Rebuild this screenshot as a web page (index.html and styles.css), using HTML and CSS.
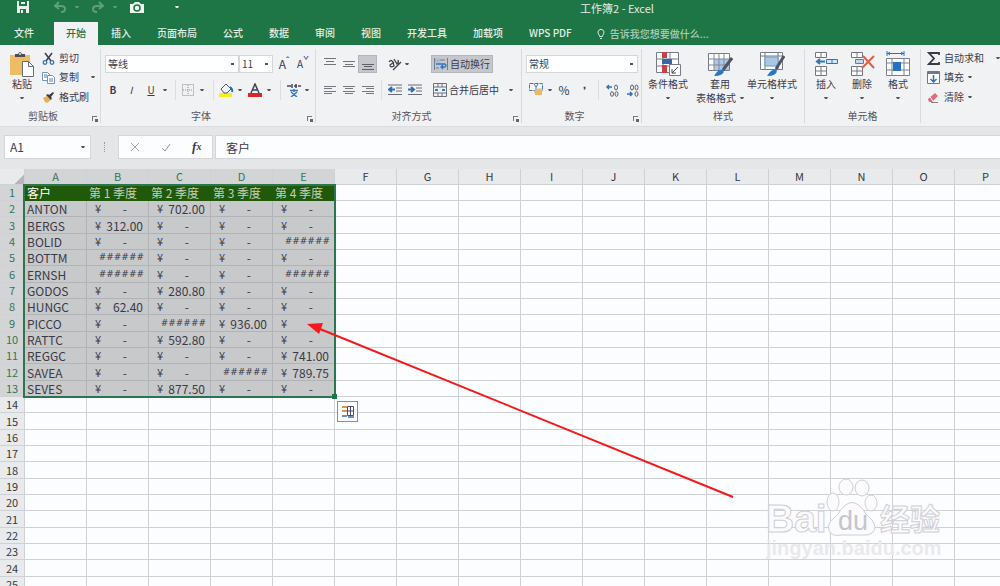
FILE: index.html
```html
<!DOCTYPE html>
<html lang="zh-CN">
<head>
<meta charset="utf-8">
<title>工作簿2 - Excel</title>
<link rel="stylesheet" href="styles.css">
</head>
<body>
<header class="top">
  <div class="titlebar">
    <div class="quick">
      <button aria-label="保存"><svg width="14" height="14" viewBox="0 0 14 14"><path d="M1 1h12v12H1z" fill="#e9f3ec"/><path d="M3 1h8v5H3zM4 9h6v4H4z" fill="#1e7545"/><path d="M5 2h4v2H5zM5 10h2v3H5z" fill="#e9f3ec"/></svg></button>
      <button aria-label="撤消"><svg width="14" height="12" viewBox="0 0 14 12" fill="none" stroke="#5f9f7a" stroke-width="2"><path d="M6 1L2 5l4 3M2 5h6q4 0 4 3t-4 3"/></svg></button>
      <i class="caret dim"></i>
      <button aria-label="恢复"><svg width="14" height="12" viewBox="0 0 14 12" fill="none" stroke="#5f9f7a" stroke-width="2"><path d="M8 1l4 4-4 3M12 5H6q-4 0-4 3t4 3"/></svg></button>
      <i class="caret dim"></i>
      <button aria-label="截图"><svg width="16" height="13" viewBox="0 0 16 13"><path d="M1 3h3l2-2h4l2 2h3v9H1z" fill="#eef6f0"/><circle cx="8" cy="7" r="3" fill="none" stroke="#1e7545" stroke-width="1.5"/></svg></button>
      <i class="caret lit"></i>
    </div>
    <div class="doc">工作簿2 - Excel</div>
  </div>
  <nav class="tabs">
    <a href="#" class="file">文件</a><a href="#" class="active">开始</a><a href="#">插入</a><a href="#">页面布局</a><a href="#">公式</a><a href="#">数据</a><a href="#">审阅</a><a href="#">视图</a><a href="#">开发工具</a><a href="#">加载项</a><a href="#">WPS PDF</a>
    <button class="tell"><svg width="8" height="12" viewBox="0 0 8 12" fill="none" stroke="#d5e8dc"><path d="M2.5 8.500Q2.500 7 1.500 6A3 3 0 1 1 6.500 6Q5.500 7 5.500 8.500zM3 10.500h2"/></svg>告诉我您想要做什么...</button>
  </nav>
</header>

<section class="ribbon">
  <div class="group clipboard">
    <div class="body">
      <button class="big"><svg width="26" height="26" viewBox="0 0 26 26"><path d="M1 4h20v20H1z" fill="#edbc63"/><path d="M6 6V3h3q2-4 4 0h3v3z" fill="#4c4d55"/><circle cx="11" cy="3" r="1" fill="#eee"/><path d="M13.500 10.500h6l5 5v10h-11z" fill="#fff" stroke="#666a78"/><path d="M19.500 10.500v5h5" fill="none" stroke="#666a78"/></svg><span>粘贴</span><i class="caret"></i></button>
      <div class="stack">
        <button><svg width="13" height="13" viewBox="0 0 13 13" fill="none"><path d="M3 1l6 8M10 1L4 9" stroke="#383c55" stroke-width="1.500"/><circle cx="3" cy="10.500" r="1.800" stroke="#3b6fae" stroke-width="1.300"/><circle cx="10" cy="10.500" r="1.800" stroke="#3b6fae" stroke-width="1.300"/></svg>剪切</button>
        <button><svg width="13" height="13" viewBox="0 0 13 13" fill="#fff" stroke="#7591bb"><path d="M.5 1.500h5l2 2v6h-7z"/><path d="M5.500 4.500h5l2 2v6h-7z"/><path d="M7 8h4M7 10h4M2 4h3M2 6h3" stroke="#4e83c0"/></svg>复制<i class="caret gap"></i></button>
        <button><svg width="13" height="13" viewBox="0 0 13 13"><path d="M1 7l4-2 4 4-4 3-2-1z" fill="#e5ae59"/><path d="M4 4l5 5 1-2-1-1 3-4-1-1-4 3-1-1z" fill="#3d3c45"/></svg>格式刷</button>
      </div>
    </div>
    <div class="name">剪贴板<i class="launch"></i></div>
  </div>

  <div class="group font">
    <div class="body rows">
      <div class="line fontline">
        <select aria-label="字体"><option>等线</option></select>
        <select aria-label="字号"><option>11</option></select>
        <button class="grow" aria-label="增大字号">A<sup>ˆ</sup></button>
        <button class="shrink" aria-label="减小字号">A<sup>ˇ</sup></button>
      </div>
      <div class="line tools">
        <button><b>B</b></button><button><em>I</em></button><button><u>U</u></button><i class="caret"></i><i class="bar"></i>
        <button aria-label="边框"><svg width="12" height="12" viewBox="0 0 12 12" fill="none" stroke="#8c8f98"><path d="M.5.5h11v11H.5zM6 1v10M1 6h10" stroke-dasharray="1 1"/></svg></button><i class="caret"></i><i class="bar"></i>
        <button aria-label="填充颜色"><svg width="16" height="14" viewBox="0 0 16 14"><path d="M1 10h13v4H1z" fill="#f4ef19"/><path d="M3 6l5-5 5 5-4 4H6z" fill="#f3f5fa" stroke="#4a5574"/><path d="M12 4q3 2 2 5" fill="none" stroke="#2e6db4" stroke-width="2"/></svg></button><i class="caret"></i>
        <button aria-label="字体颜色"><svg width="14" height="14" viewBox="0 0 14 14"><path d="M0 10h14v4H0z" fill="#d8272a"/><path d="M3 10l4-9 4 9M5 7h4" fill="none" stroke="#3e4258" stroke-width="1.500"/></svg></button><i class="caret"></i><i class="bar"></i>
        <button aria-label="拼音指南"><svg width="14" height="14" viewBox="0 0 14 14" fill="none"><path d="M0 3h4M5 1v4M7 3h3M11 3h3M9 1v4" stroke="#47485a" stroke-width="1.500"/><path d="M3 7.500h8M7 6v3M4 9l6 5M10 9l-6 5" stroke="#3b77bd" stroke-width="1.500"/></svg></button><i class="caret"></i>
      </div>
    </div>
    <div class="name">字体<i class="launch"></i></div>
  </div>

  <div class="group align">
    <div class="body rows">
      <div class="line alignline">
        <button aria-label="顶端对齐"><svg width="12" height="14" viewBox="0 0 12 14" stroke="#72747c"><path d="M0 1.500h12M2 4.500h8M0 7.500h12"/></svg></button>
        <button aria-label="垂直居中"><svg width="12" height="14" viewBox="0 0 12 14" stroke="#72747c"><path d="M0 4.500h12M2 7.500h8M0 9.500h12"/></svg></button>
        <button class="on" aria-label="底端对齐"><svg width="12" height="14" viewBox="0 0 12 14" stroke="#5e6068"><path d="M0 7.500h12M2 9.500h8M0 12.500h12"/></svg></button>
        <i></i>
        <button aria-label="方向"><svg width="14" height="14" viewBox="0 0 14 14" fill="none" stroke="#42434d" stroke-width="1.300"><path d="M1 5q2-3 4 0l1 4q-4 2-4-1l4-3M6 2l3 5q2-1 1-4M5 13l8-8"/></svg></button>
        <i class="caret"></i>
        <button class="wrap on"><svg width="14" height="14" viewBox="0 0 14 14" fill="none"><path d="M.5 1v12M13.500 1v12M2 3h9M2 11h3" stroke="#747b8d"/><path d="M1 1.500h5v4H1z" fill="#9dbbe0"/><path d="M2 7h9q2 1 0 3H7M9 8l-2 2 2 2" stroke="#3472b9" stroke-width="1.300"/></svg>自动换行</button>
      </div>
      <div class="line alignline">
        <button aria-label="左对齐"><svg width="12" height="10" viewBox="0 0 12 10" stroke="#777982"><path d="M0 1.500h12M0 3.500h8M0 6.500h12M0 8.500h8"/></svg></button>
        <button aria-label="居中"><svg width="12" height="10" viewBox="0 0 12 10" stroke="#777982"><path d="M0 1.500h12M2 3.500h8M0 6.500h12M2 8.500h8"/></svg></button>
        <button aria-label="右对齐"><svg width="12" height="10" viewBox="0 0 12 10" stroke="#777982"><path d="M0 1.500h12M4 3.500h8M0 6.500h12M4 8.500h8"/></svg></button>
        <i class="bar"></i>
        <button aria-label="减少缩进"><svg width="14" height="12" viewBox="0 0 14 12" fill="none"><path d="M0 1h14M8 4h6M8 7h6M0 10.500h14" stroke="#6a6d78"/><path d="M7 5.500H2M4 3L1 5.500 4 8" stroke="#2c6ebb" stroke-width="2"/></svg></button>
        <button aria-label="增加缩进"><svg width="14" height="12" viewBox="0 0 14 12" fill="none"><path d="M0 1h14M8 4h6M8 7h6M0 10.500h14" stroke="#6a6d78"/><path d="M0 5.500h5M3 3l3 2.500L3 8" stroke="#2c6ebb" stroke-width="2"/></svg></button>
        <button class="wrap"><svg width="14" height="14" viewBox="0 0 14 14" fill="none" stroke="#6d7180"><path d="M.5.5h13v13H.5zM5 0v4M9 0v4M5 10v4M9 10v4M0 4h14M0 10h14"/><path d="M2 7h3M12 7H9" stroke="#3978bd" stroke-width="2"/></svg>合并后居中<i class="caret gap"></i></button>
      </div>
    </div>
    <div class="name">对齐方式<i class="launch"></i></div>
  </div>

  <div class="group number">
    <div class="body rows">
      <div class="line numline"><select aria-label="数字格式"><option>常规</option></select></div>
      <div class="line numtools">
        <button aria-label="会计数字格式"><svg width="15" height="14" viewBox="0 0 15 14"><path d="M.5.5h13v7H.5z" fill="#f7f9fc" stroke="#3b77bb" stroke-dasharray="4 1"/><path d="M5 1l2 3 2-3M7 4v3" stroke="#3b77bb" fill="none"/><path d="M5 8q4-4 8-2v6H6z" fill="#ecb966"/></svg></button><i class="caret"></i>
        <button class="pct">%</button><button class="comma">❜</button><i class="bar"></i>
        <button aria-label="增加小数位数"><svg width="13" height="13" viewBox="0 0 13 13" fill="none" stroke="#5c5e6a"><path d="M1 3h5M3 1L1 3l2 2" stroke="#2f70b8" stroke-width="1.500"/><ellipse cx="10" cy="3.500" rx="1.500" ry="2.500"/><ellipse cx="6" cy="10" rx="1.500" ry="2.300"/><ellipse cx="10.500" cy="10" rx="1.500" ry="2.300"/></svg></button>
        <button aria-label="减少小数位数"><svg width="13" height="13" viewBox="0 0 13 13" fill="none" stroke="#5c5e6a"><path d="M1 10h5M4 8l2 2-2 2" stroke="#2f70b8" stroke-width="1.500"/><ellipse cx="6" cy="3.500" rx="1.500" ry="2.500"/><ellipse cx="10.500" cy="3.500" rx="1.500" ry="2.500"/><ellipse cx="10.500" cy="10" rx="1.500" ry="2.300"/></svg></button>
      </div>
    </div>
    <div class="name">数字<i class="launch"></i></div>
  </div>

  <div class="group styles">
    <div class="body">
      <button class="big"><svg width="26" height="26" viewBox="0 0 26 26" fill="none"><path d="M1.500 1.500h22v20h-22zM8 1v20M15 1v20M1 8h22M1 15h22" fill="#fff" stroke="#777b87"/><path d="M7 1h5v6H7zM7 14h5v8H7z" fill="#cb3e47"/><path d="M7 8h10v5H7z" fill="#3767aa"/><path d="M14.500 13.500h11v11h-11z" fill="#fff" stroke="#777b87"/><path d="M17 22l6-6M17 18v4h4" stroke="#444"/></svg><span>条件格式</span><i class="caret"></i></button>
      <button class="big"><svg width="26" height="26" viewBox="0 0 26 26" fill="none"><path d="M1.500 2.500h21v17h-21z" fill="#fff" stroke="#777b87"/><path d="M7 8h15v11H7z" fill="#a9c8e8"/><path d="M7 3v16M12 3v16M17 3v16M2 8h20M2 14h20" stroke="#858995"/><path d="M25 7L16 19" stroke="#515461" stroke-width="3"/><path d="M7 25q5-8 10-6 0 6-10 6z" fill="#2877c4"/></svg><span>套用</span><span class="more">表格格式<i class="caret"></i></span></button>
      <button class="big"><svg width="26" height="26" viewBox="0 0 26 26" fill="none"><path d="M1.500 1.500h22v17h-22zM1 5h22M6 1v17M19 1v17" fill="#fff" stroke="#777b87"/><path d="M6 6h13v9H6z" fill="#a9c8e8" stroke="#6e96c5"/><path d="M25 5l-8 13" stroke="#515461" stroke-width="3"/><path d="M8 25q5-8 10-6 0 6-10 6z" fill="#2877c4"/></svg><span>单元格样式</span><i class="caret"></i></button>
    </div>
    <div class="name">样式</div>
  </div>

  <div class="group cells">
    <div class="body">
      <button class="big"><svg width="26" height="26" viewBox="0 0 26 26" fill="none" stroke="#747783"><path d="M2.500 1.500h11v5h-11zM8 1v5M2.500 15.500h11v9h-11zM8 15v10M2 20h12" fill="#fff"/><path d="M13.500 8.500h11v4h-11zM19 8v5" fill="#d7e6f5" stroke="#2f74bd"/><path d="M12 10.500H4M7 8l-3 2.500L7 13" stroke="#2f74bd" stroke-width="2"/></svg><span>插入</span><i class="caret"></i></button>
      <button class="big"><svg width="26" height="26" viewBox="0 0 26 26" fill="none" stroke="#747783"><path d="M2.500 1.500h11v5h-11zM8 1v5M2.500 15.500h11v9h-11zM8 15v10M2 20h12" fill="#fff"/><path d="M6.500 8.500h8v4h-8z" fill="#c2d7ed"/><path d="M14 5l11 12M25 5L13 17" stroke="#dd6045" stroke-width="2"/></svg><span>删除</span><i class="caret"></i></button>
      <button class="big"><svg width="26" height="26" viewBox="0 0 26 26" fill="none"><path d="M1.500 7.500h23v17h-23zM7 7v17M19 7v17M1 12h23M1 19h23" fill="#fff" stroke="#7d818d"/><path d="M8 11h8v9H8z" fill="#2472c2"/><path d="M2 2.500h17M2 0v5M19 0v5M5 1L3 2.500 5 4M16 1l2 1.500L16 4" stroke="#2472c2"/></svg><span>格式</span><i class="caret"></i></button>
    </div>
    <div class="name">单元格</div>
  </div>

  <div class="group edit">
    <div class="body"><div class="stack">
      <button><svg width="13" height="13" viewBox="0 0 13 13" fill="none" stroke="#373945" stroke-width="1.800"><path d="M12 3V1H2l5 5.500L2 12h10v-2"/></svg>自动求和<i class="caret gap"></i></button>
      <button><svg width="13" height="13" viewBox="0 0 13 13" fill="none"><path d="M.5.5h12v12H.5z" fill="#fff" stroke="#6f7789"/><path d="M0 2h13" stroke="#6f7789" stroke-width="2"/><path d="M6.500 4v7M3.500 8l3 3 3-3" stroke="#2b70be" stroke-width="1.500"/></svg>填充<i class="caret"></i></button>
      <button><svg width="13" height="13" viewBox="0 0 13 13"><path d="M1 8l7-6 3 3-6 6H2z" fill="#e8697a"/><path d="M3 6l3 4" stroke="#fff"/><path d="M4 11.500h7" stroke="#8c7d83"/></svg>清除<i class="caret"></i></button>
    </div></div>
  </div>
</section>

<section class="formula">
  <label class="box namebox"><input aria-label="名称框" value="A1"><i class="caret"></i></label>
  <i class="dots"></i>
  <div class="box fx">
    <button aria-label="取消"><svg width="10" height="10" viewBox="0 0 10 10" stroke="#a5a7ad"><path d="M1 1l8 8M9 1L1 9"/></svg></button>
    <button aria-label="输入"><svg width="10" height="10" viewBox="0 0 10 10" fill="none" stroke="#8f9198"><path d="M1 6l3 3 5-7"/></svg></button>
    <button class="fn"><em>f</em>x</button>
  </div>
  <input class="box value" aria-label="编辑栏" value="客户">
</section>

<main class="sheet">
  <table id="grid"></table>
  <div class="selection"></div>
  <button class="tag" aria-label="快速分析"><svg width="14" height="14" viewBox="0 0 14 14" fill="none"><path d="M1 2h5M1 6h5" stroke="#e29350" stroke-width="2"/><path d="M1 11h5M7 12h6" stroke="#6d8fc0" stroke-width="2"/><path d="M6.500 1.500h6v9h-6zM6 6h7M9.500 2v9" stroke="#4c4a72"/></svg></button>
  <svg class="arrow" width="450" height="190" viewBox="0 0 450 190"><path d="M20 10L433 178" stroke="#f5191b" stroke-width="2"/><path d="M7 5l16-1-4 11z" fill="#f5191b"/></svg>
  <svg class="mark" width="182" height="90" viewBox="0 0 182 90">
    <g fill="#fbfbfd" stroke="#cfcfd5">
      <text class="logo" x="2" y="54">Bai</text>
      <ellipse cx="82" cy="9" rx="7" ry="8"/><ellipse cx="98" cy="10" rx="7" ry="8"/><ellipse cx="69" cy="24" rx="6" ry="9"/><ellipse cx="107" cy="25" rx="6" ry="8"/>
      <path d="M76 33q12-17 24 0 3 5 8 9 6 8 0 13-4 3-11 2H78q-11 2-13-5-2-7 5-12 4-3 6-7z"/>
      <text class="logo cn" x="116" y="52">经验</text>
    </g>
    <text class="du" x="74" y="52">du</text>
    <text class="site" x="2" y="77">jingyan.baidu.com</text>
  </svg>
</main>
<script src="app.js"></script>
</body>
</html>
```
FILE: app.js
```js
const rows = [
  ["ANTON", "-", "702.00", "-", "-"],
  ["BERGS", "312.00", "-", "-", "-"],
  ["BOLID", "-", "-", "-", "#"],
  ["BOTTM", "#", "-", "-", "-"],
  ["ERNSH", "#", "-", "-", "#"],
  ["GODOS", "-", "280.80", "-", "-"],
  ["HUNGC", "62.40", "-", "-", "-"],
  ["PICCO", "-", "#", "936.00", ""],
  ["RATTC", "-", "592.80", "-", "-"],
  ["REGGC", "-", "-", "-", "741.00"],
  ["SAVEA", "-", "-", "#", "789.75"],
  ["SEVES", "-", "877.50", "-", "-"]
];
const titles = ["客户", "第 1 季度", "第 2 季度", "第 3 季度", "第 4 季度"];
const grid = document.getElementById("grid");

// Enough columns and rows to cover the visible sheet.
const columnCount = Math.min(26, Math.max(5, Math.ceil((window.innerWidth - 25) / 62)));
const rowCount = Math.max(13, Math.ceil((grid.parentElement.clientHeight - 16) / 16.4));

// Accounting cells keep the currency sign left and the amount right.
function amount(v) {
  if (v === "#") return '<td class="sel hash">######</td>';
  const kind = v === "-" ? "zero" : "sum";
  return `<td class="sel"><div class="money"><span>¥</span><span class="${kind}">${v}</span></div></td>`;
}

let html = "<colgroup><col class=\"numbers\">" + "<col class=\"data\">".repeat(columnCount) + "</colgroup>";
html += '<thead><tr><th class="corner"></th>';
for (let c = 0; c < columnCount; c++) {
  html += `<th class="${c < 5 ? "hot" : ""}">${String.fromCharCode(65 + c)}</th>`;
}
html += "</tr></thead><tbody>";
for (let r = 1; r <= rowCount; r++) {
  html += `<tr><th class="${r <= 13 ? "hot" : ""}">${r}</th>`;
  let used = 0;
  if (r === 1) {
    html += titles.map(t => `<td class="head">${t}</td>`).join("");
    used = 5;
  } else if (r <= 13) {
    const [name, ...values] = rows[r - 2];
    html += `<td class="sel">${name}</td>` + values.map(amount).join("");
    used = 5;
  }
  html += "<td></td>".repeat(columnCount - used) + "</tr>";
}
grid.innerHTML = html + "</tbody>";
```
FILE: styles.css
```css
* { box-sizing: border-box; }
body { margin: 0; height: 100vh; display: flex; flex-direction: column; overflow: hidden; background: #e6e7e9; color: #3c3b4a; font: 10px/14px "Noto Sans CJK SC", sans-serif; }
button, input, select { margin: 0; padding: 0; border: 0; border-radius: 0; background: none; color: inherit; font: inherit; }
button { display: flex; align-items: center; justify-content: center; white-space: nowrap; }
i { font-style: normal; }
svg { flex: none; display: block; }
.caret { width: 4px; height: 2px; flex: none; place-self: center; background: #55555f; clip-path: polygon(0 0, 100% 0, 75% 100%, 25% 100%); }
.caret.gap { margin-left: 8px; }

.top { flex: none; background: #1e7545; color: #e3efe7; }
.titlebar { height: 22px; position: relative; display: flex; justify-content: center; padding-left: 234px; }
.quick { position: absolute; left: 16px; top: 0; height: 14px; display: flex; align-items: center; }
.quick button:nth-of-type(2) { margin-left: 23px; }
.quick .dim { background: #5f9f7a; margin: 0 12px 0 8px; }
.quick .lit { background: #e9f3ec; margin-left: 30px; }
.doc { font-size: 11px; line-height: 16px; }
.tabs { display: flex; height: 23px; font-weight: 500; }
.tabs a { padding: 0 13px; line-height: 21px; color: inherit; text-decoration: none; }
.tabs .file { padding: 0 14px; margin-right: 6px; }
.tabs .active { padding: 0 12px; background: #f1f2f4; color: #1e7545; }
.tell { gap: 5px; margin-left: 12px; color: #a9cdb8; }

.ribbon { flex: none; display: flex; padding-top: 4px; background: #f1f2f4; border-bottom: 1px solid #dcdde0; height: 82px; }
.group { flex: none; display: flex; flex-direction: column; border-right: 1px solid #d9dade; margin-bottom: 3px; }
.clipboard { width: 101px; }
.font { width: 215px; }
.align { width: 206px; }
.number { width: 120px; }
.styles { width: 163px; }
.cells { width: 116px; }
.edit { flex: 1; border: 0; }
.body { flex: 1; display: flex; padding-left: 4px; }
.rows { flex-direction: column; padding-top: 5px; gap: 6px; }
.name { position: relative; height: 14px; line-height: 14px; text-align: center; padding-right: 14px; color: #555460; }
.styles .name, .cells .name { padding: 0; }
.launch { position: absolute; right: 3px; bottom: 2px; width: 5px; height: 5px; border: 1px solid #777; border-width: 1px 0 0 1px; }
.launch::after { content: ""; position: absolute; left: 2px; top: 2px; width: 3px; height: 3px; background: #666; }
.big { flex-direction: column; justify-content: flex-start; padding-top: 2px; line-height: 14px; }
.big > .caret { margin-top: 6px; }
.big span { display: flex; }
.big .more { gap: 4px; }
.clipboard .big { width: 36px; }
.stack { display: flex; flex-direction: column; padding-left: 2px; }
.stack button { height: 20px; gap: 4px; justify-content: flex-start; }
.stack button:first-child { height: 18px; }
.line { display: grid; height: 20px; align-items: center; }
select { appearance: none; height: 18px; padding: 0 0 0 2px; background: #fff; border: 1px solid #d5d6da; color: #3c3b4a; background-image: linear-gradient(#55555f, #55555f); background-size: 3px 2px; background-repeat: no-repeat; background-position: right 4px center; }
.fontline { grid-template-columns: 134px 34px 22px 16px; }
.grow { font-size: 12px; }
.shrink { font-size: 10px; }
sup { font-size: 10px; line-height: 8px; align-self: flex-start; }
.tools { grid-template-columns: 16px 20px 20px 8px 12px 14px 14px 8px 18px 10px 20px 8px 14px 14px 12px; }
.bar { width: 1px; height: 20px; background: #dcdde1; justify-self: center; }
.alignline { grid-template-columns: 19px 19px 19px 8px 20px 20px 1fr; }
.alignline button { height: 18px; }
.alignline .on { background: #c6c7cc; border: 1px solid #b4b5ba; }
.alignline .wrap { justify-self: start; gap: 2px; padding: 0 2px; margin-left: 6px; }
.alignline > .caret { justify-self: start; }
.numline { grid-template-columns: 112px; }
.numtools { grid-template-columns: 20px 8px 20px 20px 8px 20px 20px; }
.pct { font-size: 12px; }
.styles .big { width: 52px; }
.styles .body { padding-left: 0; }
.cells .body { padding-left: 3px; }
.cells .big { width: 36px; }

.formula { flex: none; display: flex; height: 42px; padding-top: 8px; background: #e5e6e8; }
.box { height: 24px; background: #fcfdfe; border: 1px solid #d5d6da; }
.namebox { display: flex; width: 87px; margin-left: 4px; padding: 0 5px; font-size: 12px; }
.namebox input { flex: 1; min-width: 0; }
.dots { width: 1px; height: 10px; margin: 7px 13px; border-left: 1px dotted #999; }
.fx { display: flex; width: 95px; align-items: center; justify-content: space-around; }
.fn { font: italic bold 10px/14px "Liberation Serif", serif; }
.fn em { font-size: 13px; }
.value { flex: 1; min-width: 0; margin-left: 2px; padding-left: 10px; font-size: 12px; border-right: 0; }

.sheet { position: relative; flex: 1; min-height: 0; overflow: hidden; background: #fcfdfe; }
table { table-layout: fixed; width: min-content; border-collapse: separate; border-spacing: 0; font-size: 12px; line-height: 15px; }
.numbers { width: 25px; }
.data { width: 62px; }
th, td { height: 16px; padding: 0; border: 0 solid #cfd1d6; border-width: 0 1px 1px 0; white-space: nowrap; }
tbody tr:nth-child(3n) > * { height: 17px; }
th { font-size: 11px; font-weight: 400; background: #e9eaec; color: #373642; }
.corner { background: linear-gradient(135deg, #e9eaec 75%, #b6b7bb 75%); }
th.hot { background: #d3d4d6; color: #357457; }
td { padding-left: 2px; }
.sel { background: #c8c9cb; border-color: #b2b3b7; color: #3b3a46; }
.head { background: #205909; border-color: #205909; color: #c2d0bb; }
.head:nth-child(2) { color: #fff; }
.hash { font: italic 9px/15px "DejaVu Sans", sans-serif; text-align: right; padding-right: 4px; }
.money { display: flex; justify-content: space-between; padding: 0 5px 0 6px; }
.money span:first-child { font-size: 11px; }
.money .zero { padding-right: 16px; }
.selection { position: absolute; left: 23px; top: 15px; width: 313px; height: 214px; border: 2px solid #2d7450; }
.selection::after { content: ""; position: absolute; right: -3px; bottom: -3px; width: 5px; height: 5px; background: #1e7545; }
.tag { position: absolute; left: 337px; top: 232px; width: 21px; height: 21px; background: #fcfdfe; border: 1px solid #719e89; }
.arrow { position: absolute; left: 300px; top: 150px; }
.mark { position: absolute; right: 54px; bottom: 18px; }
.logo { font: bold 39px "Liberation Sans", sans-serif; }
.logo.cn { font: bold 30px "Noto Sans CJK SC", sans-serif; }
.du { font: 27px "Liberation Sans", sans-serif; fill: #c5c5cd; }
.site { font: bold 20px "Liberation Sans", sans-serif; fill: #e9e9ed; }
```
